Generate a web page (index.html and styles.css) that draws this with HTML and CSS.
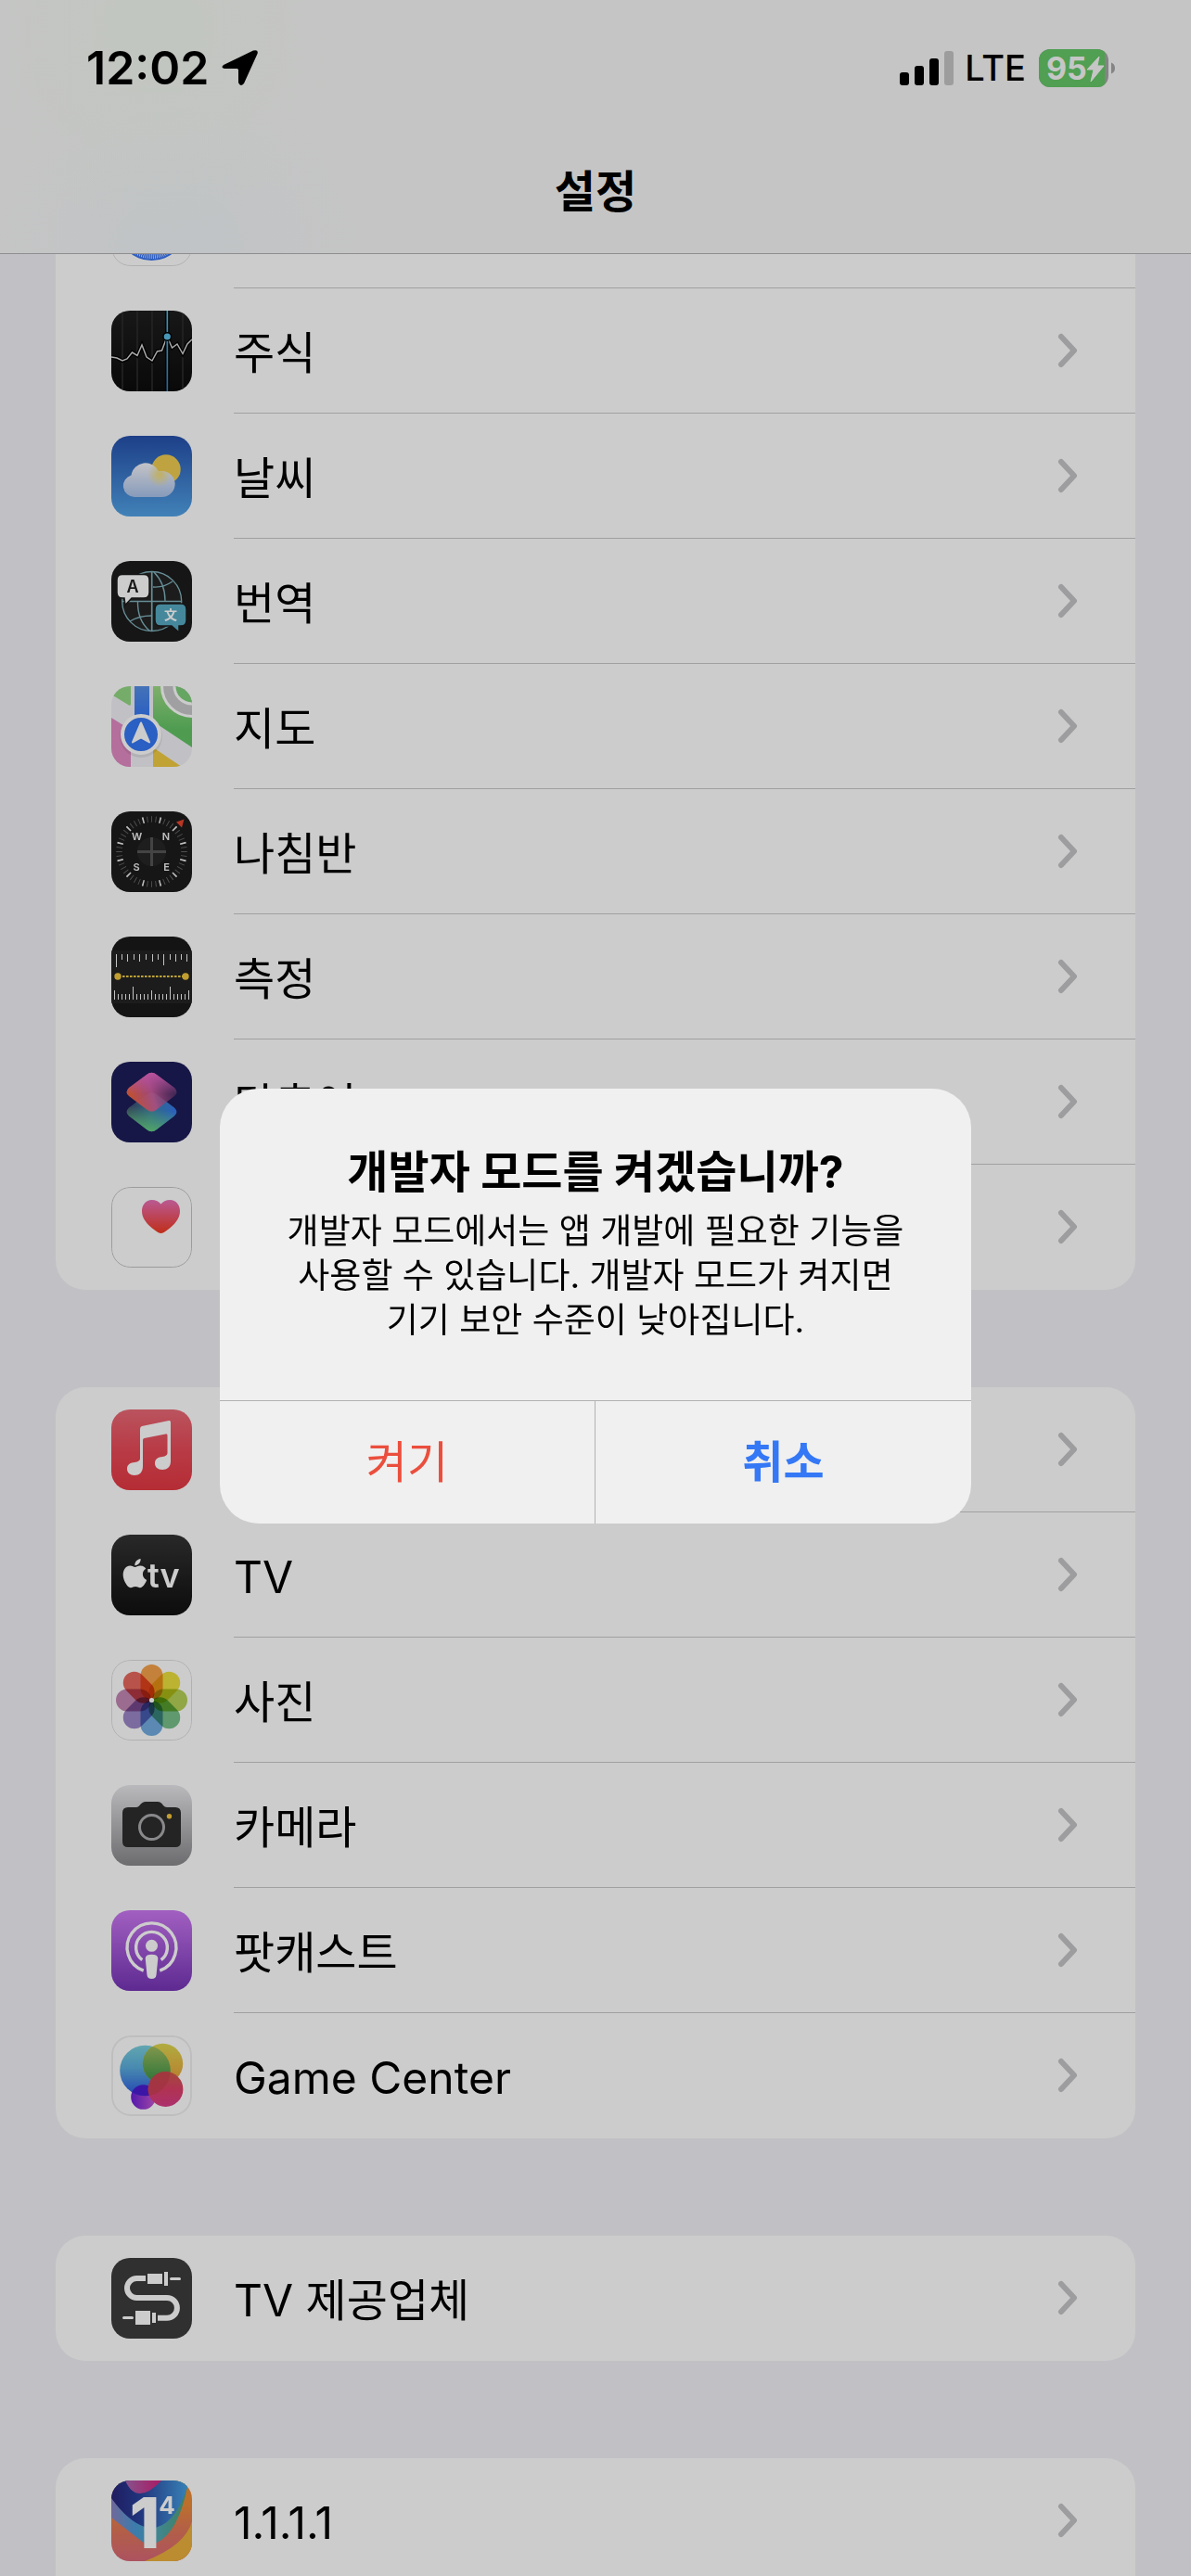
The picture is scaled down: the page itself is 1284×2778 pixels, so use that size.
FILE: index.html
```html
<!DOCTYPE html>
<html lang="ko">
<head>
<meta charset="utf-8">
<meta name="viewport" content="width=device-width, initial-scale=1">
<title>설정</title>
<link rel="stylesheet" href="styles.css">
</head>
<body>
<svg class="defs" aria-hidden="true">
  <symbol id="chevron" viewBox="0 0 22 38"><path d="M4 4 18 19 4 34" fill="none" stroke="#c5c5c7" stroke-width="6" stroke-linecap="round" stroke-linejoin="round"/></symbol>
</svg>
<div class="screen">
  <header class="navbar">
    <div class="status">
      <div class="status-side">
        <span class="time">12:02</span>
        <svg class="locate" width="40" height="40" viewBox="0 0 40 40" aria-hidden="true"><path d="M2 17 34 1.500Q40 0 38.500 5L24 37Q20 41.500 18 36V22.500Q18 21 16.500 21H3Q-1.500 20 2 17Z"/></svg>
      </div>
      <div class="status-side">
        <svg class="signal" width="58" height="37" viewBox="0 0 58 37" aria-hidden="true">
          <rect y="23" width="10" height="14" rx="3"/><rect x="16" y="16" width="10" height="21" rx="3"/><rect x="32" y="8" width="10" height="29" rx="3"/><rect x="48" width="10" height="37" rx="3" fill="#c5c5c5"/>
        </svg>
        <span class="network">LTE</span>
        <svg class="battery" width="83" height="41" viewBox="0 0 83 41" role="img" aria-label="95%">
          <defs><clipPath id="cell"><rect width="75" height="41" rx="12"/></clipPath></defs>
          <g clip-path="url(#cell)"><rect width="75" height="41" fill="#a6a6a6"/><rect width="71" height="41" fill="#65c767"/></g>
          <path d="M78 14.500Q82 16 82 20.500T78 26.500Z" fill="#a6a6a6"/>
          <text x="8" y="33" class="battery-text">95</text>
          <path d="M65 8 52 22H59L56 35 70 18H63Z" fill="#f8f8f8" stroke="#f8f8f8" stroke-width="1" stroke-linejoin="round"/>
        </svg>
      </div>
    </div>
    <h1 class="nav-title">설정</h1>
  </header>

  <main class="list">
    <section class="card card-top">
      <a class="row" href="#safari" aria-label="Safari">
        <svg class="icon" viewBox="0 0 87 87"><rect width="87" height="87" fill="#fff"/><circle cx="43.500" cy="43.500" r="37.500" fill="#3a76f2"/><circle cx="43.500" cy="43.500" r="33" fill="none" stroke="#fff" stroke-width="5" pathLength="100" stroke-dasharray=".3 .7"/><rect class="ring" x=".5" y=".5" width="86" height="86" rx="20"/></svg>
        <span class="cell"></span>
      </a>
      <a class="row" href="#stocks">
        <svg class="icon" viewBox="0 0 87 87"><defs><linearGradient id="st" x2="0" y2="1"><stop stop-color="#1e1e1e"/><stop offset="1" stop-color="#0c0c0c"/></linearGradient><linearGradient id="sl" x2="0" y2="1"><stop stop-color="#58bce8"/><stop offset="1" stop-color="#347fb8"/></linearGradient></defs><rect width="87" height="87" fill="url(#st)"/><path d="M12 0V87M28 0V87M44 0V87M77 0V87" stroke="#2f2f2f" stroke-width="1.500"/><path d="M0 50 6 51 12 54 17 52 22.500 45 28 48.500 33 37 38 50 44 54 49.500 44 54.500 43 59 31H61.500L65.500 40 71 36 77 46.500 82 36 87 31" fill="none" stroke="#000" stroke-width="4"/><path d="M0 50 6 51 12 54 17 52 22.500 45 28 48.500 33 37 38 50 44 54 49.500 44 54.500 43 59 31H61.500L65.500 40 71 36 77 46.500 82 36 87 31" fill="none" stroke="#d4d4d4" stroke-width="1.500"/><path d="M60.300 0V87" stroke="#000" stroke-width="4"/><rect x="59.500" width="1.700" height="87" fill="url(#sl)"/><circle cx="60.300" cy="28" r="4.300" fill="#5abde6" stroke="#000" stroke-width="1.400"/></svg>
        <span class="cell"><span class="label">주식</span><svg class="chevron"><use href="#chevron"/></svg></span>
      </a>
      <a class="row" href="#weather">
        <svg class="icon" viewBox="0 0 87 87"><defs><linearGradient id="wt" x2="0" y2="1"><stop stop-color="#2550ab"/><stop offset="1" stop-color="#52a2e6"/></linearGradient><linearGradient id="wc" x2="0" y2="1"><stop stop-color="#f4f4fa"/><stop offset="1" stop-color="#a9c2ea"/></linearGradient><radialGradient id="wg" cx="52" cy="42" r="13" gradientUnits="userSpaceOnUse"><stop stop-color="#f2dc78"/><stop offset="1" stop-color="#f2dc78" stop-opacity="0"/></radialGradient></defs><rect width="87" height="87" fill="url(#wt)"/><circle cx="59" cy="36" r="15.700" fill="#f0cc52"/><path d="M25 66A12 12 0 0 1 21.500 42.500A15.500 15.500 0 0 1 51 38.500A14 14 0 1 1 54 66Z" fill="url(#wc)"/><path d="M25 66A12 12 0 0 1 21.500 42.500A15.500 15.500 0 0 1 51 38.500A14 14 0 1 1 54 66Z" fill="url(#wg)"/></svg>
        <span class="cell"><span class="label">날씨</span><svg class="chevron"><use href="#chevron"/></svg></span>
      </a>
      <a class="row" href="#translate">
        <svg class="icon" viewBox="0 0 87 87"><rect width="87" height="87" fill="#1c1c1c"/><g fill="none" stroke="#80b2bc" stroke-width="1.400"><circle cx="43.700" cy="43.500" r="32" fill="#232323"/><path d="M43.700 11V76M11.500 43.500H76" stroke-width="1.700"/><path d="M46 12Q58 24 58 43M45 28Q56 29 66 22M28.500 43Q28 64 41 75M20 65Q30 59 43 59"/></g><path d="M12 14.500H35Q41 14.500 41 20.500V34Q41 40 35 40H22L15 47.500 14 40H12Q6 40 6 34V20.500Q6 14.500 12 14.500Z" fill="#fff" stroke="#1c1c1c" stroke-width="1.500"/><path d="M53 46H75Q81 46 81 52V64Q81 70 75 70H73V77L65 70H53Q47 70 47 64V52Q47 46 53 46Z" fill="#57abc4" stroke="#1c1c1c" stroke-width="1.500"/><text x="23" y="34" class="glyph-a">A</text><text x="64" y="63" class="glyph-b">文</text></svg>
        <span class="cell"><span class="label">번역</span><svg class="chevron"><use href="#chevron"/></svg></span>
      </a>
      <a class="row" href="#maps">
        <svg class="icon" viewBox="0 0 87 87"><defs><linearGradient id="mg" x2="0" y2="1"><stop stop-color="#9fdb86"/><stop offset=".7" stop-color="#63c466"/></linearGradient><linearGradient id="mb" x2="0" y2="1"><stop stop-color="#5690e6"/><stop offset="1" stop-color="#3577f4"/></linearGradient></defs><rect width="87" height="87" fill="#f2f2f7"/><path d="M0 0H21V19Q21 21.500 19 20.500L0 9Z" fill="#94d884"/><path d="M45 0H87V66L45 38Z" fill="url(#mg)"/><path d="M0 34 21 47V87H0Z" fill="#e28bc4"/><path d="M45 66 76 87H45Z" fill="#f2cb42"/><circle cx="87" cy="0" r="32.500" fill="#c9c9cc" stroke="#fff" stroke-width="3"/><circle cx="87" cy="0" r="19" fill="#7fd07c" stroke="#fff" stroke-width="3"/><rect x="25" width="16" height="34" fill="url(#mb)"/><circle cx="32" cy="54" r="23" fill="#000" opacity=".08"/><circle cx="32" cy="52" r="20" fill="#3577f4" stroke="#fff" stroke-width="4"/><path d="M32 39.500 41 60.500 32 55.500 23 60.500Z" fill="#fff" stroke="#fff" stroke-width="2" stroke-linejoin="round"/></svg>
        <span class="cell"><span class="label">지도</span><svg class="chevron"><use href="#chevron"/></svg></span>
      </a>
      <a class="row" href="#compass">
        <svg class="icon" viewBox="0 0 87 87"><rect width="87" height="87" fill="#1c1c1c"/><g fill="none" stroke-width="6.500"><circle cx="43.500" cy="43.500" r="35" stroke="#666" pathLength="48" stroke-dasharray=".2 .8" stroke-dashoffset=".1"/><circle cx="43.500" cy="43.500" r="35" stroke="#eee" pathLength="12" stroke-dasharray=".085 .915" stroke-dashoffset=".042" transform="rotate(15 43.500 43.500)"/></g><circle cx="43.500" cy="43.500" r="15.500" fill="#262626"/><path d="M43.500 28V59M28 43.500H59" stroke="#555" stroke-width="3"/><path d="M70 11.500 78.500 8.500 76 17.500Z" fill="#e5452f"/><g class="glyph-c"><text x="27.500" y="31">W</text><text x="59" y="31">N</text><text x="27" y="64">S</text><text x="59.500" y="64">E</text></g></svg>
        <span class="cell"><span class="label">나침반</span><svg class="chevron"><use href="#chevron"/></svg></span>
      </a>
      <a class="row" href="#measure">
        <svg class="icon" viewBox="0 0 87 87"><rect width="87" height="87" fill="#1a1a1a"/><rect y="15" width="87" height="57" fill="#242424"/><path d="M5.500 19V33M11.500 19V25M17.500 19V27M24.500 19V25M30.500 19V27M37.500 19V25M44.500 19V27M50.500 19V25M56.500 19V31M63.500 19V25M69.500 19V27M75.500 19V25M81.500 19V27M3.500 68V58M7.500 68V62M11.500 68V62M15.500 68V62M19.500 68V62M23.500 68V54M27.500 68V62M31.500 68V62M35.500 68V62M39.500 68V62M43.500 68V58M47.500 68V62M51.500 68V62M55.500 68V62M59.500 68V62M63.500 68V54M67.500 68V62M71.500 68V62M75.500 68V62M79.500 68V62M83.500 68V58" stroke="#f4f4f4"/><path d="M12 43H77" stroke="#eccb45" stroke-width="2.200" stroke-dasharray="2.600 1.400"/><circle cx="7" cy="43" r="3.700" fill="#f0c63c"/><circle cx="80" cy="43" r="3.700" fill="#f0c63c"/></svg>
        <span class="cell"><span class="label">측정</span><svg class="chevron"><use href="#chevron"/></svg></span>
      </a>
      <a class="row" href="#shortcuts">
        <svg class="icon" viewBox="0 0 87 87"><defs><linearGradient id="sa" x1=".1" y1=".7" x2=".95" y2=".5"><stop stop-color="#ee6442"/><stop offset=".5" stop-color="#d860a0" stop-opacity=".9"/><stop offset="1" stop-color="#7a3e78" stop-opacity=".6"/></linearGradient><linearGradient id="sc" x2="0" y2="1"><stop stop-color="#e868c8"/><stop offset=".55" stop-color="#e868c8" stop-opacity="0"/></linearGradient><linearGradient id="sb" x1="0" y1=".4" x2="1" y2=".5"><stop stop-color="#3c4468"/><stop offset=".5" stop-color="#3c84a8"/><stop offset="1" stop-color="#3478f0"/></linearGradient><linearGradient id="sd" x1=".6" y1="0" x2=".4" y2="1"><stop offset=".4" stop-color="#68d080" stop-opacity="0"/><stop offset="1" stop-color="#68d080"/></linearGradient></defs><rect width="87" height="87" fill="#1c1d58"/><path d="M38 35.500Q43.500 31 49 35.500L68 49.500Q73 54.500 68 58.500L49 73Q43.500 77.500 38 73L19 58.500Q14 54.500 19 49.500Z" fill="url(#sb)"/><path d="M38 35.500Q43.500 31 49 35.500L68 49.500Q73 54.500 68 58.500L49 73Q43.500 77.500 38 73L19 58.500Q14 54.500 19 49.500Z" fill="url(#sd)"/><path d="M38 14Q43.500 9.500 49 14L68 28Q73 33 68 37L49 51.500Q43.500 56 38 51.500L19 37Q14 33 19 28Z" fill="url(#sa)"/><path d="M38 14Q43.500 9.500 49 14L68 28Q73 33 68 37L49 51.500Q43.500 56 38 51.500L19 37Q14 33 19 28Z" fill="url(#sc)"/></svg>
        <span class="cell"><span class="label">단축어</span><svg class="chevron"><use href="#chevron"/></svg></span>
      </a>
      <a class="row" href="#health" aria-label="건강">
        <svg class="icon" viewBox="0 0 87 87"><defs><linearGradient id="ht" x2="0" y2="1"><stop stop-color="#e870b8"/><stop offset="1" stop-color="#f03a20"/></linearGradient></defs><rect width="87" height="87" fill="#fff"/><path d="M53.500 50Q51 50 44 44.500C36 38 33 32 33 26C33 19 37.500 14 43.500 14C48 14 51.500 16 53.500 18.500C55.500 16 59 14 63.500 14C69.500 14 74 19 74 26C74 32 71 38 63 44.500Q56 50 53.500 50Z" fill="url(#ht)"/><rect class="ring ring-dark" x=".5" y=".5" width="86" height="86" rx="20"/></svg>
        <span class="cell"><svg class="chevron"><use href="#chevron"/></svg></span>
      </a>
    </section>

    <section class="card">
      <a class="row" href="#music" aria-label="음악">
        <svg class="icon" viewBox="0 0 87 87"><defs><linearGradient id="mu" x2="0" y2="1"><stop stop-color="#e96976"/><stop offset=".5" stop-color="#e74a58"/><stop offset="1" stop-color="#e33842"/></linearGradient></defs><rect width="87" height="87" fill="url(#mu)"/><path d="M31 21Q31 18.500 33 18L62 12Q64 11.500 64 14V56C64 62 60 65 55 65C50 65 47 62 47 58C47 53 51 51.500 55 51Q60.500 50 60.500 47V28Q60.500 26 58.500 26.400L35.500 31Q34 31.400 34 33V61C34 68 30 71 25 71C20 71 17 68 17 64C17 59 21 57.500 25 57Q31 56 31 53Z" fill="#fff"/></svg>
        <span class="cell"><svg class="chevron"><use href="#chevron"/></svg></span>
      </a>
      <a class="row" href="#tv">
        <svg class="icon" viewBox="0 0 87 87"><defs><linearGradient id="tv" x2="0" y2="1"><stop stop-color="#333"/><stop offset="1" stop-color="#101010"/></linearGradient></defs><rect width="87" height="87" fill="url(#tv)"/><path transform="translate(9.800 26) scale(1.300)" fill="#fff" d="M12.152 6.896c-.948 0-2.415-1.078-3.960-1.040-2.040.027-3.910 1.183-4.961 3.014-2.117 3.675-.546 9.103 1.519 12.090 1.013 1.454 2.208 3.090 3.792 3.039 1.520-.065 2.090-.987 3.935-.987 1.831 0 2.350.987 3.960.948 1.637-.026 2.676-1.480 3.676-2.948 1.156-1.688 1.636-3.325 1.662-3.415-.039-.013-3.182-1.221-3.220-4.857-.026-3.040 2.480-4.494 2.597-4.559-1.429-2.090-3.623-2.324-4.390-2.376-2-.156-3.675 1.090-4.610 1.090zM15.530 3.830c.843-1.012 1.400-2.427 1.245-3.830-1.207.052-2.662.805-3.532 1.818-.780.896-1.454 2.338-1.273 3.714 1.338.104 2.715-.688 3.559-1.701"/><text x="39" y="57" class="glyph-tv">tv</text></svg>
        <span class="cell"><span class="label">TV</span><svg class="chevron"><use href="#chevron"/></svg></span>
      </a>
      <a class="row" href="#photos">
        <svg class="icon" viewBox="0 0 87 87"><rect width="87" height="87" fill="#fff"/><g class="petals"><rect x="31.500" y="5" width="24" height="38" rx="12" fill="#f6a24c"/><rect x="31.500" y="5" width="24" height="38" rx="12" fill="#ece040" transform="rotate(45 43.500 43.500)"/><rect x="31.500" y="5" width="24" height="38" rx="12" fill="#b6d056" transform="rotate(90 43.500 43.500)"/><rect x="31.500" y="5" width="24" height="38" rx="12" fill="#78c08a" transform="rotate(135 43.500 43.500)"/><rect x="31.500" y="5" width="24" height="38" rx="12" fill="#72ace0" transform="rotate(180 43.500 43.500)"/><rect x="31.500" y="5" width="24" height="38" rx="12" fill="#9a86c6" transform="rotate(225 43.500 43.500)"/><rect x="31.500" y="5" width="24" height="38" rx="12" fill="#c488b4" transform="rotate(270 43.500 43.500)"/><rect x="31.500" y="5" width="24" height="38" rx="12" fill="#e6685e" transform="rotate(315 43.500 43.500)"/></g><circle cx="43.500" cy="43.500" r="2.600" fill="#fff"/><rect class="ring" x=".5" y=".5" width="86" height="86" rx="20"/></svg>
        <span class="cell"><span class="label">사진</span><svg class="chevron"><use href="#chevron"/></svg></span>
      </a>
      <a class="row" href="#camera">
        <svg class="icon" viewBox="0 0 87 87"><defs><linearGradient id="cm" x2="0" y2="1"><stop stop-color="#e8e8ec"/><stop offset="1" stop-color="#88888c"/></linearGradient></defs><rect width="87" height="87" fill="url(#cm)"/><path d="M18 24H27Q29 24 30.500 22Q33.500 18 37 18H50Q53.500 18 56 22Q57.500 24 60 24H69Q75 24 75 30V61Q75 67 69 67H18Q12 67 12 61V30Q12 24 18 24Z" fill="#2d2d2d"/><circle cx="43.500" cy="45.500" r="13" fill="none" stroke="#acacb0" stroke-width="3"/><circle cx="62.500" cy="33.700" r="2.700" fill="#f5c53c"/></svg>
        <span class="cell"><span class="label">카메라</span><svg class="chevron"><use href="#chevron"/></svg></span>
      </a>
      <a class="row" href="#podcasts">
        <svg class="icon" viewBox="0 0 87 87"><defs><linearGradient id="pc" x2="0" y2="1"><stop stop-color="#cb78f2"/><stop offset="1" stop-color="#7535b6"/></linearGradient></defs><rect width="87" height="87" fill="url(#pc)"/><g fill="none" stroke="#fff" stroke-width="3.400"><path d="M34.700 65.200A26.400 26.400 0 1 1 52.300 65.200"/><path d="M33.300 53.700A16.900 16.900 0 1 1 53.700 53.700"/></g><circle cx="43.500" cy="38.300" r="6.500" fill="#fff"/><path d="M36.700 52Q36.700 47.700 43.500 47.700T50.300 52L48.500 70Q48 74 43.500 74T38.500 70Z" fill="#fff"/></svg>
        <span class="cell"><span class="label">팟캐스트</span><svg class="chevron"><use href="#chevron"/></svg></span>
      </a>
      <a class="row" href="#game-center">
        <svg class="icon" viewBox="0 0 87 87"><defs><linearGradient id="ga" x2="0" y2="1"><stop stop-color="#7ad0dc"/><stop offset=".45" stop-color="#5aacdc"/><stop offset="1" stop-color="#2c58e0"/></linearGradient><linearGradient id="gb" x2="0" y2="1"><stop stop-color="#ddd850"/><stop offset="1" stop-color="#e89a38"/></linearGradient><linearGradient id="gc" x2="0" y2="1"><stop stop-color="#cc5c48"/><stop offset=".5" stop-color="#dc4068"/><stop offset="1" stop-color="#d83c88"/></linearGradient><linearGradient id="gd"><stop stop-color="#6a20d8"/><stop offset="1" stop-color="#c858d0"/></linearGradient><linearGradient id="ge" x2="0" y2="1"><stop stop-color="#a8c060"/><stop offset="1" stop-color="#349048"/></linearGradient><clipPath id="gk"><circle cx="36.500" cy="38" r="27.300"/></clipPath></defs><rect width="87" height="87" fill="#fff"/><circle cx="34.500" cy="66.500" r="13.300" fill="url(#gd)"/><circle cx="36.500" cy="38" r="27.300" fill="url(#ga)"/><circle cx="55.500" cy="30.500" r="21.700" fill="url(#gb)"/><g clip-path="url(#gk)"><circle cx="55.500" cy="30.500" r="21.700" fill="url(#ge)"/><circle cx="34.500" cy="66.500" r="13.300" fill="#4a1cd0"/></g><circle cx="58.500" cy="58" r="18.900" fill="url(#gc)"/><g clip-path="url(#gk)"><circle cx="58.500" cy="58" r="18.900" fill="#c84050" opacity=".7"/></g><rect class="ring ring-wide" x="1" y="1" width="85" height="85" rx="20"/></svg>
        <span class="cell"><span class="label">Game Center</span><svg class="chevron"><use href="#chevron"/></svg></span>
      </a>
    </section>

    <section class="card">
      <a class="row" href="#tv-provider">
        <svg class="icon" viewBox="0 0 87 87"><rect width="87" height="87" fill="#3c3c3c"/><path d="M37 22H27.500A10.500 10.500 0 0 0 27.500 43H60A10.900 10.900 0 0 1 60 64.800H50" fill="none" stroke="#fff" stroke-width="6"/><path d="M39 17H55V28H39ZM57 15H61V30H57ZM26 57H42V72H26ZM44 59H48V70H44Z" fill="#fff"/><path d="M64.500 22.500H73.500M13.500 64.500H22.500" stroke="#fff" stroke-width="3" stroke-linecap="round"/></svg>
        <span class="cell"><span class="label">TV 제공업체</span><svg class="chevron"><use href="#chevron"/></svg></span>
      </a>
    </section>

    <section class="card card-bottom">
      <a class="row" href="#1111">
        <svg class="icon" viewBox="0 0 87 87"><defs><linearGradient id="oa"><stop stop-color="#282478"/><stop offset=".35" stop-color="#28409a"/><stop offset="1" stop-color="#48a4e8"/></linearGradient><linearGradient id="ob"><stop stop-color="#8c84c0"/><stop offset=".3" stop-color="#4a9cd8"/><stop offset=".6" stop-color="#50a8b0"/><stop offset="1" stop-color="#54a068"/></linearGradient><linearGradient id="oc" x2="0" y2="1"><stop offset=".3" stop-color="#ec8c38"/><stop offset=".6" stop-color="#e07858"/><stop offset="1" stop-color="#d86878"/></linearGradient><linearGradient id="od"><stop stop-color="#a868b0"/><stop offset="1" stop-color="#d8207c"/></linearGradient></defs><rect width="87" height="87" fill="url(#oc)"/><path d="M87 44Q80 70 36 87H87Z" fill="#eab03c"/><path d="M0 0H87L82 7Q72 56 49 67Q42 71 36 68L0 40Z" fill="url(#ob)"/><path d="M0 0H84L82 7Q70 44 50 50Q43 54 36 50Q18 44 0 19Z" fill="url(#oa)"/><path d="M15 0Q21 14 31 14T54 0Z" fill="url(#od)"/><text x="36" y="73" class="glyph-one">1</text><text x="60" y="36" class="glyph-four">4</text></svg>
        <span class="cell"><span class="label">1.1.1.1</span><svg class="chevron"><use href="#chevron"/></svg></span>
      </a>
    </section>
  </main>

  <div class="backdrop">
    <section class="alert" role="alertdialog" aria-labelledby="alert-title" aria-describedby="alert-text">
      <div class="alert-body">
        <h2 class="alert-title" id="alert-title">개발자 모드를 켜겠습니까?</h2>
        <p class="alert-text" id="alert-text">개발자 모드에서는 앱 개발에 필요한 기능을 사용할 수 있습니다. 개발자 모드가 켜지면 기기 보안 수준이 낮아집니다.</p>
      </div>
      <div class="alert-actions">
        <button class="action action-on" type="button">켜기</button>
        <button class="action action-cancel" type="button">취소</button>
      </div>
    </section>
  </div>
</div>
</body>
</html>
```
FILE: styles.css
```css
* {
  box-sizing: border-box;
}

body {
  margin: 0;
  background: #f2f2f7;
  color: #000;
  font-family: Inter, "Noto Sans CJK KR", sans-serif;
  font-size: 48px;
  line-height: 60px;
}

.defs {
  position: absolute;
  width: 0;
  height: 0;
}

.screen {
  position: relative;
  height: 100vh;
  overflow: hidden;
}

/* Navigation bar, laid over the scrolling list */
.navbar {
  position: absolute;
  z-index: 1;
  top: 0;
  left: 0;
  right: 0;
  height: 274px;
  border-bottom: 1px solid #b2b2b4;
  background:
    radial-gradient(circle at 13% 12%, #f2f8f0 0, transparent 220px),
    radial-gradient(circle at 15% 100%, #f0f5f8 0, transparent 200px),
    #f7f7f7;
}

.status {
  display: flex;
  justify-content: space-between;
  align-items: center;
  height: 146px;
  padding: 0 81px 0 93px;
}

.status-side {
  display: flex;
  align-items: center;
}

.time {
  margin-right: 14px;
  font-size: 50px;
  font-weight: 600;
}

.network {
  margin: 0 14px 0 12px;
  font-size: 38px;
  font-weight: 500;
}

.battery {
  overflow: visible;
}

.battery-text {
  font-size: 34px;
  font-weight: 700;
  fill: #f8f8f8;
}

.nav-title {
  margin: 31px 0 0;
  font-size: 48px;
  font-weight: 700;
  text-align: center;
}

/* Grouped list */
.list {
  display: flex;
  flex-direction: column;
  gap: 105px;
  height: 100%;
  padding: 176px 60px 0;
  overflow-y: auto;
  scrollbar-width: none;
}

.card {
  flex: none;
  border-radius: 32px;
  background: #fff;
}

.card-bottom {
  border-radius: 32px 32px 0 0;
}

.row {
  display: flex;
  align-items: center;
  gap: 45px;
  height: 135px;
  padding-left: 60px;
  color: inherit;
  text-decoration: none;
}

.icon {
  flex: none;
  width: 87px;
  height: 87px;
  border-radius: 20px;
}

.cell {
  display: flex;
  flex: 1;
  align-items: center;
  align-self: stretch;
  padding-right: 62px;
  border-bottom: 1px solid #c8c8ca;
}

.row:last-child .cell {
  border-bottom-color: transparent;
}

.label {
  padding-top: 5px;
}

.chevron {
  width: 22px;
  height: 38px;
  margin-left: auto;
}

.ring {
  fill: none;
  stroke: #dedede;
}

.ring-dark {
  stroke: #c4c4c4;
}

.ring-wide {
  stroke: #eee;
  stroke-width: 2;
}

.petals {
  isolation: isolate;
}

.petals rect {
  mix-blend-mode: multiply;
}

.glyph-a,
.glyph-b,
.glyph-c,
.glyph-one,
.glyph-four {
  text-anchor: middle;
}

.glyph-a {
  font-size: 18px;
  font-weight: 600;
  fill: #1c1c1c;
}

.glyph-b {
  font-size: 14px;
  font-weight: 700;
  fill: #fff;
}

.glyph-c {
  font-size: 11px;
  font-weight: 600;
  fill: #f0f0f0;
}

.glyph-tv {
  font-size: 36px;
  font-weight: 600;
  fill: #fff;
}

.glyph-one {
  font-size: 75px;
  font-weight: 800;
  fill: #fff;
}

.glyph-four {
  font-size: 26px;
  font-weight: 700;
  fill: #fff;
}

/* Alert */
.backdrop {
  position: absolute;
  z-index: 2;
  inset: 0;
  display: grid;
  place-items: center;
  padding-top: 39px;
  background: rgba(0, 0, 0, 0.2);
}

.alert {
  width: min(810px, 90%);
  overflow: hidden;
  border-radius: 42px;
  background: #f0f0f0;
  text-align: center;
  word-break: keep-all;
}

.alert-body {
  padding: 60px 60px 62px;
}

.alert-title {
  margin: 0 0 10px;
  font-size: 48px;
  font-weight: 700;
}

.alert-text {
  margin: 0;
  font-size: 37px;
  line-height: 48px;
}

.alert-actions {
  display: grid;
  grid-template-columns: 1fr 1fr;
  border-top: 1px solid #b2b2b2;
}

.action {
  height: 132px;
  padding: 0;
  border: 0;
  background: none;
  font: inherit;
}

.action-on {
  border-right: 1px solid #b2b2b2;
  color: #eb4e3d;
}

.action-cancel {
  color: #3478f6;
  font-weight: 700;
}
```
